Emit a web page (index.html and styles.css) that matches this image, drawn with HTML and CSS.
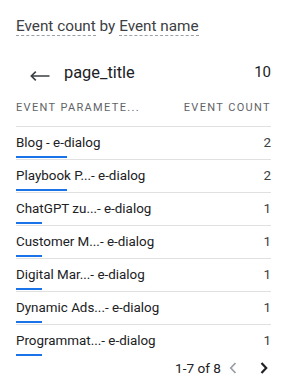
FILE: index.html
```html
<!DOCTYPE html>
<html lang="en">
<head>
    <meta charset="UTF-8">
    <title>Event count by Event name</title>
    <link rel="stylesheet" href="styles.css">
</head>
<body>
    <div class="card">
        <div class="card-title">
            <span class="dim">Event count</span> by <span class="dim">Event name</span>
        </div>

        <div class="drill">
            <svg class="back" width="20" height="10" viewBox="0 0 20 10">
                <path d="M19.5 5H1.2M5.8 0.6L1.3 5l4.5 4.4" fill="none" stroke="#3c4043" stroke-width="1.6"/>
            </svg>
            <span class="drill-name">page_title</span>
            <span class="drill-total">10</span>
        </div>

        <div class="table-head">
            <span>Event paramete...</span>
            <span>Event count</span>
        </div>

        <div class="rows">
            <div class="row">
                <span class="row-label">Blog - e-dialog</span>
                <span class="row-value">2</span>
                <div class="bar" style="width: 20%"></div>
            </div>
            <div class="row">
                <span class="row-label">Playbook P...- e-dialog</span>
                <span class="row-value">2</span>
                <div class="bar" style="width: 20%"></div>
            </div>
            <div class="row">
                <span class="row-label">ChatGPT zu...- e-dialog</span>
                <span class="row-value">1</span>
                <div class="bar" style="width: 10%"></div>
            </div>
            <div class="row">
                <span class="row-label">Customer M...- e-dialog</span>
                <span class="row-value">1</span>
                <div class="bar" style="width: 10%"></div>
            </div>
            <div class="row">
                <span class="row-label">Digital Mar...- e-dialog</span>
                <span class="row-value">1</span>
                <div class="bar" style="width: 10%"></div>
            </div>
            <div class="row">
                <span class="row-label">Dynamic Ads...- e-dialog</span>
                <span class="row-value">1</span>
                <div class="bar" style="width: 10%"></div>
            </div>
            <div class="row last">
                <span class="row-label">Programmat...- e-dialog</span>
                <span class="row-value">1</span>
                <div class="bar" style="width: 10%"></div>
            </div>
        </div>

        <div class="pager">
            <span class="pager-text">1-7 of 8</span>
            <svg class="chev prev" width="8" height="12" viewBox="0 0 8 12">
                <path d="M6.5 1L1.8 6l4.7 5" fill="none" stroke="#9aa0a6" stroke-width="1.8"/>
            </svg>
            <svg class="chev next" width="8" height="12" viewBox="0 0 8 12">
                <path d="M1.5 1l4.7 5-4.7 5" fill="none" stroke="#202124" stroke-width="2.2"/>
            </svg>
        </div>
    </div>
</body>
</html>
```

FILE: styles.css
```css
body {
    margin: 0;
    background: #fff;
    font-family: Roboto, "Liberation Sans", Arial, sans-serif;
    color: #202124;
}
.card {
    width: 255px;
    padding: 0 15px 0 16px;
}
.card-title {
    padding-top: 17px;
    font-size: 15.3px;
    line-height: 18px;
    color: #3c4043;
}
.card-title .dim {
    border-bottom: 1px dashed #9aa0a6;
}
.drill {
    display: flex;
    align-items: center;
    height: 32px;
    margin-top: 21px;
}
.drill .back {
    margin-left: 14px;
    margin-right: 14px;
    margin-top: 8px;
}
.drill-name {
    flex: 1;
    font-size: 16.4px;
}
.drill-total {
    font-size: 15px;
}
.table-head {
    display: flex;
    justify-content: space-between;
    align-items: center;
    height: 37px;
    margin-top: 1px;
    border-bottom: 1px solid #e0e0e0;
    font-size: 11px;
    letter-spacing: 1.35px;
    text-transform: uppercase;
    color: #5f6368;
}
.row {
    position: relative;
    display: flex;
    justify-content: space-between;
    align-items: center;
    height: 32px;
    border-bottom: 1px solid #e0e0e0;
    font-size: 13.4px;
}
.row.last {
    border-bottom: none;
}
.row-label {
    padding-bottom: 2px;
}
.row-value {
    padding-bottom: 2px;
    color: #3c4043;
}
.bar {
    position: absolute;
    left: 0;
    bottom: 1px;
    height: 2px;
    background: #1a73e8;
}
.pager {
    display: flex;
    justify-content: flex-end;
    align-items: center;
    height: 22px;
    font-size: 13.6px;
}
.pager-text {
    margin-right: 8px;
}
.chev.prev {
    margin-right: 23px;
}
.chev.next {
    margin-right: 3px;
}
```
